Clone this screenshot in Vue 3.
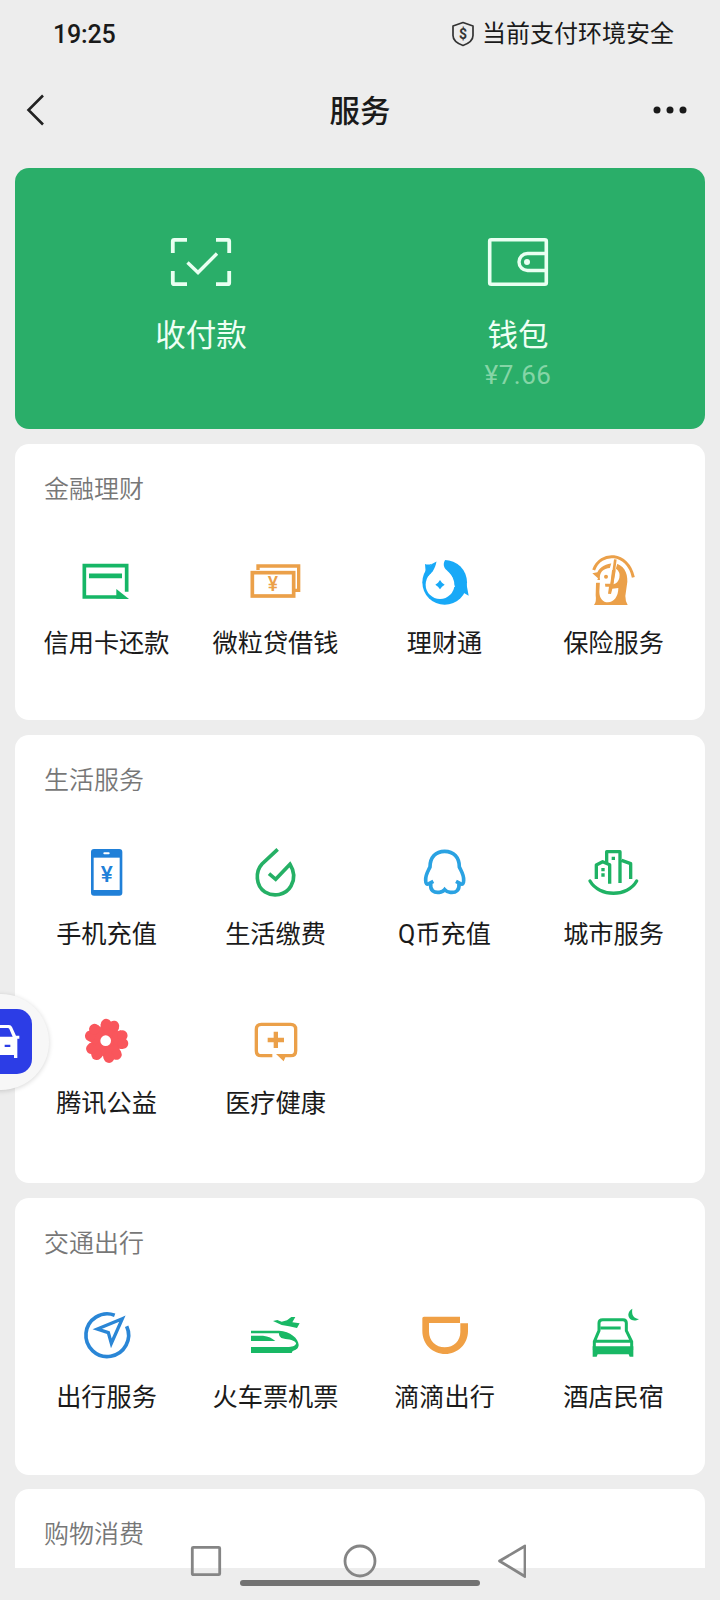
<script setup>
const GREEN = '#1fb264'
const ORANGE = '#eba049'
const BLUE = '#2a86d6'

// Every icon is drawn in a 180-unit window whose origin is given by `view`.
const sections = [
  {
    title: '金融理财',
    size: 'one',
    items: [
      { label: '信用卡还款', icon: 'card', color: '#16b666', view: '232 333 180 180' },
      { label: '微粒贷借钱', icon: 'loan', color: ORANGE, view: '739 333 180 180' },
      { label: '理财通', icon: 'fish', color: '#18a9f7', view: '166 333 180 180' },
      { label: '保险服务', icon: 'penguin', color: ORANGE, view: '673 333 180 180' },
    ],
  },
  {
    title: '生活服务',
    size: 'two',
    items: [
      { label: '手机充值', icon: 'phone', color: '#2080d8', view: '231 336 180 180' },
      { label: '生活缴费', icon: 'drop', color: '#25b065', view: '739 336 180 180' },
      { label: 'Q币充值', icon: 'qq', color: '#2aa2e2', view: '165 336 180 180' },
      { label: '城市服务', icon: 'city', color: GREEN, view: '672 336 180 180' },
      { label: '腾讯公益', icon: 'flower', color: '#f9565c', view: '231 93 180 180' },
      { label: '医疗健康', icon: 'medical', color: ORANGE, view: '738 93 180 180' },
    ],
  },
  {
    title: '交通出行',
    size: 'one tall',
    items: [
      { label: '出行服务', icon: 'compass', color: BLUE, view: '233 345 180 180' },
      { label: '火车票机票', icon: 'train', color: '#18b865', view: '739 345 180 180' },
      { label: '滴滴出行', icon: 'didi', color: '#f0a045', view: '165 345 180 180' },
      { label: '酒店民宿', icon: 'bed', color: '#18b865', view: '673 345 180 180' },
    ],
  },
  { title: '购物消费', size: 'cut', items: [] },
]
const petals = [-77, -5, 67, 139, 211]
</script>

<template>
  <div class="page">
    <header class="status">
      <span class="time">19:25</span>
      <div class="safe">
        <svg width="24" height="26" viewBox="0 0 24 26" fill="none">
          <path d="M12 1.5L22 5V14.500C22 19 17.500 22.500 12 24.500C6.500 22.500 2 19 2 14.500V5Z" stroke="#333" stroke-width="1.700" stroke-linejoin="round" />
          <text x="12" y="18" text-anchor="middle" class="dollar">$</text>
        </svg>
        <span>当前支付环境安全</span>
      </div>
    </header>
    <nav class="titlebar">
      <div class="side"><svg width="20" height="34" viewBox="0 0 20 34" fill="none"><path d="M17 2.500L2.500 17L17 31.500" stroke="#222" stroke-width="2.600" /></svg></div>
      <h1>服务</h1>
      <div class="side more"><svg width="34" height="8" viewBox="0 0 34 8" fill="#1a1a1a"><circle cx="4" cy="4" r="3.500" /><circle cx="17" cy="4" r="3.500" /><circle cx="30" cy="4" r="3.500" /></svg></div>
    </nav>

    <section class="hero">
      <div class="pay">
        <svg width="62" height="50" viewBox="0 0 62 50" fill="none" stroke="#e9fff1" stroke-width="3.800">
          <path d="M2.800 16V4.300Q2.800 2.800 4.300 2.800H17M46 2.800H57.700Q59.200 2.800 59.200 4.300V16M59.200 34V45.700Q59.200 47.200 57.700 47.200H46M17 47.200H4.300Q2.800 47.200 2.800 45.700V34" />
          <path d="M17.500 25.500L28 35.500L47 16.500" stroke-width="3.400" />
        </svg>
        <span class="name">收付款</span>
      </div>
      <div class="pay">
        <svg width="62" height="50" viewBox="0 0 62 50" fill="none" stroke="#e9fff1" stroke-width="3.600">
          <rect x="2.700" y="2.700" width="56.600" height="44.600" rx="1.500" />
          <path d="M59 16.500H40.500A8.500 8.500 0 0 0 40.500 33.500H59" stroke-width="3.400" />
          <circle cx="40" cy="25" r="3" fill="#e9fff1" stroke="none" />
        </svg>
        <span class="name">钱包</span>
        <span class="amount">¥7.66</span>
      </div>
    </section>

    <section v-for="s in sections" :key="s.title" class="card" :class="s.size">
      <h2>{{ s.title }}</h2>
      <div v-if="s.items.length" class="grid">
        <div v-for="it in s.items" :key="it.label" class="item">
          <svg class="icon" :viewBox="it.view" :color="it.color" fill="none" stroke-width="11">
            <template v-if="it.icon === 'card'">
              <path d="M352 471H254V377H381V455" stroke="currentColor" />
              <path d="M350 447L388 477H350Z" fill="currentColor" />
              <path d="M268 407.500H367" stroke="currentColor" stroke-width="14" />
            </template>
            <template v-else-if="it.icon === 'loan'">
              <path d="M775 390V378H897V451H886" stroke="currentColor" stroke-width="10" />
              <rect x="758" y="398" width="124" height="70" stroke="currentColor" />
              <text x="820" y="453" text-anchor="middle" class="yen" font-size="58" fill="currentColor">¥</text>
            </template>
            <template v-else-if="it.icon === 'fish'">
              <circle cx="255" cy="427" r="67" fill="currentColor" />
              <path fill="currentColor" d="M196 372Q205 376 216 371L198 396ZM320 430L327 467L304 454Z" />
              <circle cx="241" cy="434" r="43" fill="#fff" />
              <path fill="#fff" d="M205 411C220 396 229 382 232 354H262C250 364 250 378 258 388C266 397 281 405 281 428L286 440L278 444Z" />
              <path fill="currentColor" d="M241 420L247 428L255 434L247 440L241 448L235 440L227 434L235 428Z" />
            </template>
            <template v-else-if="it.icon === 'penguin'">
              <path fill="currentColor" d="M698 400L713 397C722 380 742 369 764 370C792 374 804 398 803 425L797 468Q797 484 804 495H703Q711 486 708 466L709 430L715 415Z" />
              <path fill="#fff" d="M721 420C718 398 730 385 752 384H758L752 431H736L737 440H748L745 461L754 462L758 446L776 444C776 470 762 487 745 487C730 487 719 475 719 455ZM769 386Q783 396 779 414Q775 430 761 433ZM704 420H721V428H704Z" />
              <path d="M767 360L758 390" stroke="#fff" stroke-width="18" />
              <path d="M767 358L757 432" stroke="currentColor" stroke-width="8" />
              <path d="M702 390C722 333 804 334 821 412" stroke="currentColor" stroke-width="9" />
              <circle cx="739" cy="410" r="6" fill="currentColor" />
            </template>
            <template v-else-if="it.icon === 'phone'">
              <rect x="273" y="357" width="94" height="140" rx="9" fill="currentColor" />
              <rect x="281" y="383" width="78" height="97" fill="#fff" />
              <rect x="310" y="367" width="19" height="6" rx="3" fill="#fff" />
              <text x="320" y="457" text-anchor="middle" class="yen" font-size="68" fill="currentColor">¥</text>
            </template>
            <path v-else-if="it.icon === 'drop'" stroke="currentColor" d="M834 358L787 402C766 425 768 468 796 486C822 502 858 496 874 468C887 446 884 424 871 403L828 448L808 431" />
            <template v-else-if="it.icon === 'qq'">
              <path stroke="currentColor" stroke-linejoin="round" d="M220 454L207 461Q197 466 197 451C196 434 204 424 210 411C210 382 227 364 254 364C281 364 298 382 298 411C304 424 312 434 311 451Q311 466 301 461L288 454" />
              <path stroke="currentColor" d="M212 461C210 482 222 489 238 487Q249 486 254 479Q260 486 271 487C288 489 299 481 297 461" />
            </template>
            <template v-else-if="it.icon === 'city'">
              <g stroke="currentColor" stroke-width="10" stroke-linejoin="round">
                <path d="M690 453C718 502 803 502 830 453" stroke-linecap="round" />
                <path d="M709 447V405L728 395L749 404V461M740 400V365H780V459M785 391L812 401V447" />
              </g>
              <path fill="currentColor" d="M724 414h10v10h-10zM724 430h10v10h-10zM755 380h10v10h-10z" />
            </template>
            <template v-else-if="it.icon === 'flower'">
              <circle cx="319" cy="183" r="43" fill="currentColor" />
              <g v-for="a in petals" :key="a" :transform="`translate(319 183) rotate(${a})`" fill="currentColor">
                <path d="M20 -24L46 -28L59 0L46 28L20 24Z" />
                <circle cx="49" cy="-12" r="16" /><circle cx="49" cy="12" r="16" />
              </g>
              <circle cx="317" cy="182" r="16" fill="#fff" />
            </template>
            <template v-else-if="it.icon === 'medical'">
              <path stroke="currentColor" stroke-width="10" d="M817 227H784Q769 227 769 212V148Q769 133 784 133H872Q887 133 887 148V212Q887 227 872 227H850" />
              <path fill="currentColor" d="M828 222H860L851 244ZM821 155h13v18h18v14h-18v17h-13v-17h-18v-14h18z" />
            </template>
            <template v-else-if="it.icon === 'compass'">
              <path stroke="currentColor" d="M346 375.500A64 64 0 1 0 382 409" />
              <path stroke="currentColor" stroke-width="10" d="M369 386L294 417L327 428L336 460Z" />
            </template>
            <template v-else-if="it.icon === 'train'">
              <path fill="currentColor" d="M754 422H838C872 423 898 447 897 466C896 478 885 481 879 483L876 489H754V471H868C882 471 890 465 889 459C880 446 861 450 845 444Q837 439 838 430H754ZM754 437H790Q814 440 827 453H754Z" />
              <path fill="currentColor" d="M820 393L833 390L846 395L862 391L875 381L887 381L878 397L900 400L892 414L868 409L846 405L838 401Z" />
            </template>
            <path v-else-if="it.icon === 'didi'" fill="currentColor" d="M192 380H300V399H207V425C207 452 228 472 254 472C282 472 301 452 301 426V400H324V423C324 463 292 492 256 492C218 492 187 463 187 423V385Q187 380 192 380Z" />
            <template v-else>
              <path stroke="currentColor" stroke-width="9" d="M704 480V455L718 422V399Q718 389 729 389H790Q800 389 800 399V422L816 455V480M704 454H816M723 414H783" />
              <path fill="currentColor" d="M699 469H821V500H810L807 493H714L711 500H699ZM818 356C815 375 822 385 838 387C822 398 805 388 806 373Q808 361 818 356Z" />
            </template>
          </svg>
          <span class="label">{{ it.label }}</span>
        </div>
      </div>
    </section>

    <div class="float">
      <div class="tile">
        <svg width="32" height="65" viewBox="0 88 96 195">
          <path fill="#fff" fill-rule="evenodd" d="M0 136H27Q33 136 36 142L48 168H58V177H52V235H42V226H0ZM0 145V171H38L28 148Q27 145 23 145ZM14 195V202H31V195Z" />
        </svg>
      </div>
    </div>

    <div class="sysnav">
      <svg width="336" height="36" viewBox="0 0 336 36" fill="none" stroke="#858585" stroke-width="2.800" stroke-linejoin="round">
        <rect x="2.300" y="4.300" width="27.400" height="27.400" rx="1" />
        <circle cx="170" cy="18" r="15" />
        <path d="M309.500 18L335 3V33.500Z" />
      </svg>
      <div class="homebar"></div>
    </div>
  </div>
</template>

<style>
body { background: #ededed; }
</style>

<style scoped>
.page {
  position: relative;
  width: 720px;
  height: 1600px;
  overflow: hidden;
  background: #ededed;
  color: #1a1a1a;
  font-family: Roboto, "Noto Sans CJK SC", sans-serif;
}
.status {
  display: flex;
  justify-content: space-between;
  align-items: center;
  height: 68px;
  padding: 0 46px 0 53px;
  box-sizing: border-box;
}
.time { font-size: 25px; font-weight: 500; letter-spacing: -0.2px; }
.safe { display: flex; align-items: center; gap: 7px; font-size: 24px; line-height: 36px; }
.dollar { font: 700 14px Roboto, sans-serif; fill: #333; }
.titlebar {
  display: flex;
  align-items: center;
  height: 84px;
  padding: 0 33px 0 26px;
}
.side { flex: 0 0 80px; display: flex; }
.more { justify-content: flex-end; }
h1 { flex: 1; margin: 0; padding: 4px 0 0 7px; text-align: center; font-size: 30.500px; line-height: 44px; font-weight: 500; }
.hero {
  display: flex;
  height: 261px;
  margin: 16px 15px 15px;
  padding: 69px 28.500px 0 27.500px;
  box-sizing: border-box;
  border-radius: 14px;
  background: #2aae69;
}
.pay { flex: 1; display: flex; flex-direction: column; align-items: center; }
.name { margin-top: 27px; font-size: 30.500px; line-height: 44px; color: #effff4; }
.amount { font-size: 26px; line-height: 34px; letter-spacing: 0.5px; color: #85d5a6; }
.card {
  margin: 0 15px 15px;
  padding: 0 7px;
  box-sizing: border-box;
  border-radius: 14px;
  background: #fff;
}
.one { height: 276px; }
.two { height: 448px; }
.tall { height: 277px; margin-bottom: 14px; }
.cut { height: 79px; margin-bottom: 0; border-radius: 14px 14px 0 0; }
h2 {
  margin: 0;
  padding: 1px 0 0 22px;
  font-size: 25px;
  line-height: 90px;
  font-weight: 350;
  color: #777;
}
.grid { display: grid; grid-template-columns: repeat(4, 169px); row-gap: 61px; padding-top: 16px; }
.item { display: flex; flex-direction: column; align-items: center; }
.icon { width: 60px; height: 60px; }
.yen { font-family: Roboto, sans-serif; font-weight: 500; }
.label { margin-top: 18px; font-size: 25.200px; line-height: 30px; white-space: nowrap; }
.float {
  position: absolute;
  left: -48px;
  top: 994px;
  width: 97px;
  height: 96px;
  border-radius: 48px;
  background: #f7f7f7;
  box-shadow: 0 1px 5px rgba(0, 0, 0, 0.16);
}
.tile {
  margin: 15px 0 0 48px;
  width: 32px;
  height: 65px;
  border-radius: 0 15px 15px 0;
  background: #2c3de6;
}
.tile svg { display: block; }
.sysnav { position: absolute; left: 190px; top: 1543px; width: 336px; }
.sysnav svg { display: block; }
.homebar { width: 240px; height: 6px; margin: 1px 0 0 50px; border-radius: 3px; background: #737373; }
</style>
